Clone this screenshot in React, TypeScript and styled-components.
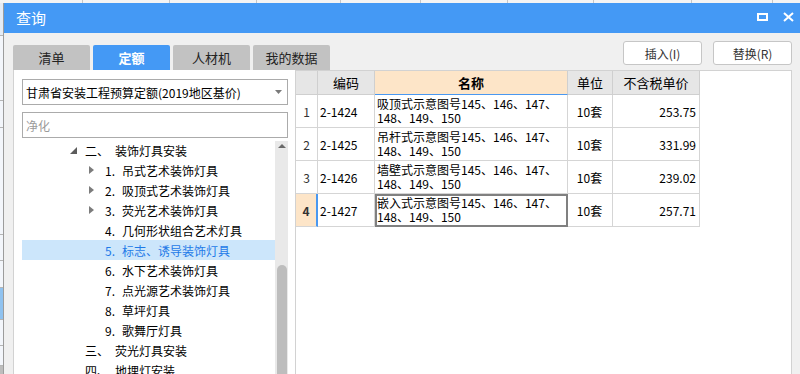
import styled, { createGlobalStyle } from 'styled-components'

const GlobalStyle = createGlobalStyle`
  html, body { margin: 0; padding: 0; }
  body {
    font-family: "Noto Sans CJK SC", "Noto Sans", sans-serif;
    font-size: 12px;
    color: #000;
  }
`

type TreeItem = {
  level: 1 | 2
  arrow?: 'open' | 'closed'
  no: string
  text: string
  selected?: boolean
}

const tree: TreeItem[] = [
  { level: 1, arrow: 'open', no: '二、', text: '装饰灯具安装' },
  { level: 2, arrow: 'closed', no: '1.', text: '吊式艺术装饰灯具' },
  { level: 2, arrow: 'closed', no: '2.', text: '吸顶式艺术装饰灯具' },
  { level: 2, arrow: 'closed', no: '3.', text: '荧光艺术装饰灯具' },
  { level: 2, no: '4.', text: '几何形状组合艺术灯具' },
  { level: 2, no: '5.', text: '标志、诱导装饰灯具', selected: true },
  { level: 2, no: '6.', text: '水下艺术装饰灯具' },
  { level: 2, no: '7.', text: '点光源艺术装饰灯具' },
  { level: 2, no: '8.', text: '草坪灯具' },
  { level: 2, no: '9.', text: '歌舞厅灯具' },
  { level: 1, no: '三、', text: '荧光灯具安装' },
  { level: 1, no: '四、', text: '地埋灯安装' },
]

const rows = [
  { code: '2-1424', name: '吸顶式示意图号145、146、147、\n148、149、150', unit: '10套', price: '253.75' },
  { code: '2-1425', name: '吊杆式示意图号145、146、147、\n148、149、150', unit: '10套', price: '331.99' },
  { code: '2-1426', name: '墙壁式示意图号145、146、147、\n148、149、150', unit: '10套', price: '239.02' },
  { code: '2-1427', name: '嵌入式示意图号145、146、147、\n148、149、150', unit: '10套', price: '257.71' },
]

const tabs = ['清单', '定额', '人材机', '我的数据']
const stripCells = [82, 86, 86, 83, 79, 86, 85, 97, 80, 40]
const sideCells = [
  { h: 33, bg: '#e4ebf4' },
  { h: 65, bg: '#f3f6fb' },
  { h: 27, bg: '#f3f6fb' },
  { h: 107, bg: '#f3f6fb' },
  { h: 26, bg: '#f3f6fb' },
  { h: 27, bg: '#f3f6fb' },
  { h: 32, bg: '#8fc2f0' },
  { h: 26, bg: '#f3f6fb' },
  { h: 20, bg: '#f3f6fb' },
  { h: 11, bg: '#bdbdbd' },
]

function App() {
  return (
    <Screen>
      <GlobalStyle />
      <TopStrip>
        {stripCells.map((w, i) => (
          <StripCell key={i} $w={w} />
        ))}
      </TopStrip>
      <SideStrip>
        {sideCells.map((c, i) => (
          <SideCell key={i} $h={c.h} $bg={c.bg} />
        ))}
      </SideStrip>

      <Window>
        <TitleBar>
          <Title>查询</Title>
          <Controls>
            <svg width="11" height="8" viewBox="0 0 11 8">
              <rect x="1" y="1" width="9" height="6" fill="none" stroke="#fff" strokeWidth="2" />
            </svg>
            <svg width="11" height="10" viewBox="0 0 11 10">
              <path d="M1 1 L10 9 M10 1 L1 9" stroke="#fff" strokeWidth="2" />
            </svg>
          </Controls>
        </TitleBar>

        <Body>
          <TopRow>
            <Tabs>
              {tabs.map((t) => (
                <Tab key={t} $active={t === '定额'}>{t}</Tab>
              ))}
            </Tabs>
            <Buttons>
              <Button>插入(I)</Button>
              <Button>替换(R)</Button>
            </Buttons>
          </TopRow>

          <Main>
            <LeftPanel>
              <Select>
                <span>甘肃省安装工程预算定额(2019地区基价)</span>
                <svg width="7" height="4" viewBox="0 0 7 4">
                  <path d="M0 0 H7 L3.5 4 Z" fill="#7a7a7a" />
                </svg>
              </Select>
              <Search>净化</Search>
              <TreeBox>
                <TreeList>
                  {tree.map((item, i) => (
                    <TreeRow key={i} $level={item.level} $selected={!!item.selected}>
                      <ArrowSlot>
                        {item.arrow === 'open' && (
                          <svg width="7" height="7" viewBox="0 0 7 7">
                            <path d="M7 0 V7 H0 Z" fill="#5c5c5c" />
                          </svg>
                        )}
                        {item.arrow === 'closed' && (
                          <svg width="5" height="8" viewBox="0 0 5 8">
                            <path d="M0 0 L5 4 L0 8 Z" fill="#7c7c7c" />
                          </svg>
                        )}
                      </ArrowSlot>
                      <NoSlot $level={item.level}>{item.no}</NoSlot>
                      <span>{item.text}</span>
                    </TreeRow>
                  ))}
                </TreeList>
                <ScrollTrack>
                  <svg width="8" height="4" viewBox="0 0 8 4">
                    <path d="M0 4 L4 0 L8 4 Z" fill="#6a6a6a" />
                  </svg>
                  <ScrollThumb />
                </ScrollTrack>
              </TreeBox>
            </LeftPanel>

            <RightPanel>
              <Grid>
                <HeadCell />
                <HeadCell>编码</HeadCell>
                <HeadCell $active>名称</HeadCell>
                <HeadCell>单位</HeadCell>
                <HeadCell>不含税单价</HeadCell>
                {rows.map((r, i) => {
                  const current = i === rows.length - 1
                  return [
                    <NumCell key={`n${i}`} $current={current}>{i + 1}</NumCell>,
                    <Cell key={`c${i}`} $align="left">{r.code}</Cell>,
                    <NameCell key={`m${i}`} $current={current}>{r.name}</NameCell>,
                    <Cell key={`u${i}`} $align="center">{r.unit}</Cell>,
                    <Cell key={`p${i}`} $align="right">{r.price}</Cell>,
                  ]
                })}
              </Grid>
            </RightPanel>
          </Main>
        </Body>
      </Window>
    </Screen>
  )
}

export default App

const Screen = styled.div`
  width: 800px;
  height: 374px;
  overflow: hidden;
  display: grid;
  grid-template-columns: 3px 797px;
  grid-template-rows: 3px 371px;
  background: #f3f6fb;
`

const TopStrip = styled.div`
  grid-column: 1 / 3;
  display: flex;
  background: #f4f4f4;
  overflow: hidden;
`

const StripCell = styled.div<{ $w: number }>`
  flex: none;
  width: ${(p) => p.$w}px;
  border-right: 1px solid #c6c6c6;
`

const SideStrip = styled.div`
  display: flex;
  flex-direction: column;
  overflow: hidden;
`

const SideCell = styled.div<{ $h: number; $bg: string }>`
  flex: none;
  height: ${(p) => p.$h}px;
  box-sizing: border-box;
  background: ${(p) => p.$bg};
  border-bottom: 1px solid #b5b5b5;
`

const Window = styled.div`
  display: flex;
  flex-direction: column;
  min-height: 0;
  background: #f0f0f0;
  border-left: 1px solid #9c9c9c;
`

const TitleBar = styled.div`
  flex: none;
  height: 30px;
  display: flex;
  align-items: center;
  justify-content: space-between;
  padding: 0 6px 0 12px;
  background: #4499f5;
  color: #fff;
`

const Title = styled.div`
  font-size: 15px;
  line-height: 30px;
`

const Controls = styled.div`
  display: flex;
  align-items: center;
  gap: 15px;
  margin-top: -2px;
`

const Body = styled.div`
  flex: 1;
  min-height: 0;
  display: flex;
  flex-direction: column;
  padding: 0 8px 0 9px;
`

const TopRow = styled.div`
  flex: none;
  height: 37px;
  display: flex;
  justify-content: space-between;
`

const Tabs = styled.div`
  align-self: flex-end;
  display: flex;
  gap: 3px;
`

const Tab = styled.div<{ $active?: boolean }>`
  width: 77px;
  height: 25px;
  display: flex;
  align-items: center;
  justify-content: center;
  border-radius: 2px 2px 0 0;
  background: ${(p) => (p.$active ? '#4499f5' : '#c2c2c2')};
  color: ${(p) => (p.$active ? '#fff' : '#222')};
  font-weight: ${(p) => (p.$active ? 'bold' : 'normal')};
  font-size: 13px;
`

const Buttons = styled.div`
  align-self: flex-start;
  margin-top: 8px;
  display: flex;
  gap: 11px;
`

const Button = styled.div`
  width: 79px;
  height: 24px;
  box-sizing: border-box;
  display: flex;
  align-items: center;
  justify-content: center;
  background: #fff;
  border: 1px solid #c6c6c6;
  border-radius: 3px;
  color: #333;
`

const Main = styled.div`
  flex: 1;
  min-height: 0;
  display: flex;
`

const LeftPanel = styled.div`
  flex: none;
  width: 282px;
  box-sizing: border-box;
  display: flex;
  flex-direction: column;
  padding: 9px 7px 0 8px;
  background: #fff;
  border-left: 1px solid #d2d2d2;
`

const Select = styled.div`
  flex: none;
  height: 26px;
  box-sizing: border-box;
  display: flex;
  align-items: center;
  justify-content: space-between;
  padding: 0 5px 0 3px;
  border: 1px solid #ababab;
  white-space: nowrap;
`

const Search = styled.div`
  flex: none;
  height: 26px;
  box-sizing: border-box;
  margin-top: 7px;
  display: flex;
  align-items: center;
  padding-left: 3px;
  border: 1px solid #ababab;
  color: #9a9a9a;
`

const TreeBox = styled.div`
  flex: 1;
  min-height: 0;
  margin-top: 2px;
  display: flex;
`

const TreeList = styled.div`
  flex: 1;
  overflow: hidden;
`

const TreeRow = styled.div<{ $level: 1 | 2; $selected: boolean }>`
  height: 20px;
  display: flex;
  align-items: center;
  padding-left: ${(p) => (p.$level === 1 ? 47 : 66)}px;
  white-space: nowrap;
  background: ${(p) => (p.$selected ? '#cce6fb' : 'transparent')};
  color: ${(p) => (p.$selected ? '#1f7ae8' : '#000')};
`

const ArrowSlot = styled.div`
  flex: none;
  width: 16px;
  height: 20px;
  display: flex;
  align-items: center;
  padding-left: 1px;
  box-sizing: border-box;
`

const NoSlot = styled.div<{ $level: 1 | 2 }>`
  flex: none;
  width: ${(p) => (p.$level === 1 ? 30 : 18)}px;
  padding-left: ${(p) => (p.$level === 1 ? 0 : 1)}px;
  box-sizing: border-box;
`

const ScrollTrack = styled.div`
  flex: none;
  width: 13px;
  margin-top: 1px;
  display: flex;
  flex-direction: column;
  align-items: center;
  padding-top: 3px;
  box-sizing: border-box;
  background: #e9e9e9;
`

const ScrollThumb = styled.div`
  width: 10px;
  flex: 1;
  margin-top: 117px;
  border-radius: 5px 5px 0 0;
  background: #bdbdbd;
`

const RightPanel = styled.div`
  flex: 1;
  min-width: 0;
  background: #fff;
  border: 1px solid #d2d2d2;
  border-bottom: none;
`

const Grid = styled.div`
  display: grid;
  grid-template-columns: 22px 57px 193px 45px 87px;
  width: 404px;
`

const HeadCell = styled.div<{ $active?: boolean }>`
  height: 24px;
  box-sizing: border-box;
  display: flex;
  align-items: center;
  justify-content: center;
  border-right: 1px solid #cfcfcf;
  border-bottom: 1px solid ${(p) => (p.$active ? '#4a98f0' : '#cfcfcf')};
  background: ${(p) => (p.$active ? '#fde5c8' : '#e6e6e6')};
  font-weight: ${(p) => (p.$active ? 'bold' : 'normal')};
  font-size: 13px;
`

const Cell = styled.div<{ $align: 'left' | 'center' | 'right' }>`
  height: 33px;
  box-sizing: border-box;
  display: flex;
  align-items: center;
  justify-content: ${(p) =>
    p.$align === 'left' ? 'flex-start' : p.$align === 'right' ? 'flex-end' : 'center'};
  padding: 0 3px 0 2px;
  border-right: 1px solid #d5d5d5;
  border-bottom: 1px solid #d5d5d5;
  font-size: 12px;
`

const NumCell = styled.div<{ $current: boolean }>`
  height: 33px;
  box-sizing: border-box;
  display: flex;
  align-items: center;
  justify-content: center;
  border-bottom: 1px solid #d5d5d5;
  border-right: ${(p) => (p.$current ? '2px solid #4a98f0' : '1px solid #d5d5d5')};
  background: ${(p) => (p.$current ? '#fde5c8' : '#fff')};
  font-weight: ${(p) => (p.$current ? 'bold' : 'normal')};
  color: #333;
`

const NameCell = styled.div<{ $current: boolean }>`
  height: 33px;
  box-sizing: border-box;
  display: flex;
  align-items: center;
  padding: 0 3px 0 2px;
  white-space: pre-line;
  line-height: 14px;
  border-right: 1px solid #d5d5d5;
  border-bottom: 1px solid #d5d5d5;
  outline: ${(p) => (p.$current ? '2px solid #808080' : 'none')};
  outline-offset: -2px;
`
